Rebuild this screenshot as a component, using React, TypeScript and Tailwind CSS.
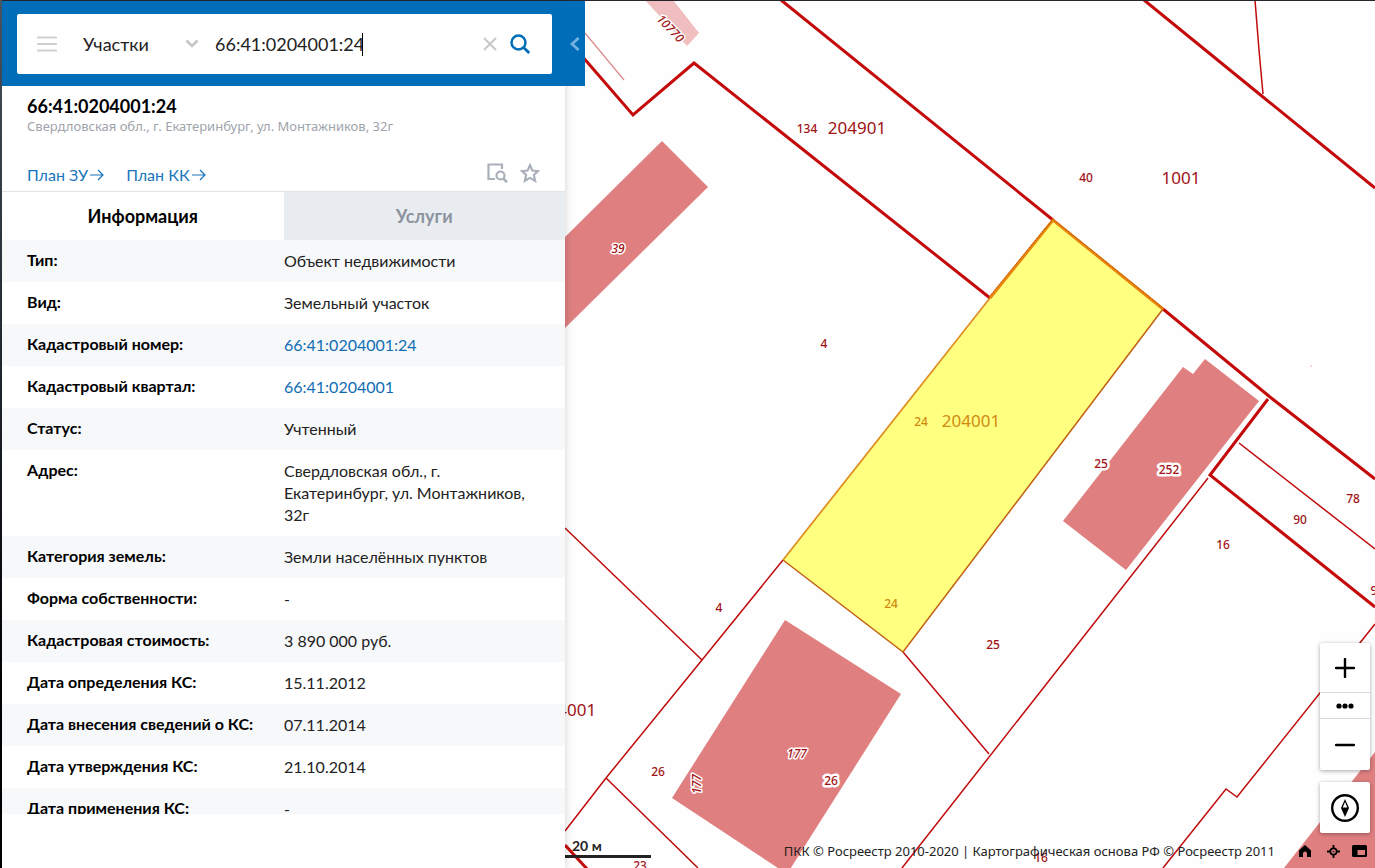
import React from "react";

type Row = { label: string; value: string; link?: boolean };

const rows: Row[] = [
  { label: "Тип:", value: "Объект недвижимости" },
  { label: "Вид:", value: "Земельный участок" },
  { label: "Кадастровый номер:", value: "66:41:0204001:24", link: true },
  { label: "Кадастровый квартал:", value: "66:41:0204001", link: true },
  { label: "Статус:", value: "Учтенный" },
  { label: "Адрес:", value: "Свердловская обл., г. Екатеринбург, ул. Монтажников, 32г" },
  { label: "Категория земель:", value: "Земли населённых пунктов" },
  { label: "Форма собственности:", value: "-" },
  { label: "Кадастровая стоимость:", value: "3 890 000 руб." },
  { label: "Дата определения КС:", value: "15.11.2012" },
  { label: "Дата внесения сведений о КС:", value: "07.11.2014" },
  { label: "Дата утверждения КС:", value: "21.10.2014" },
  { label: "Дата применения КС:", value: "-" },
];

function SearchHeader() {
  return (
    <header className="relative flex h-[85px] shrink-0 bg-[#006db8] pb-3 pl-[15px] pr-[13px] pt-[13px]">
      <form className="flex min-w-0 flex-1 items-center rounded-[2px] bg-white pl-5 pr-[22px]" onSubmit={(e) => e.preventDefault()}>
        <button type="button" aria-label="Меню" className="mr-[22px]">
          <svg width="20" height="16" viewBox="0 0 20 16" stroke="#cfcfcf" strokeWidth="2.2" strokeLinecap="round">
            <path d="M1 1.5h18M1 8h18M1 14.5h18" />
          </svg>
        </button>
        <div className="relative flex w-[120px] shrink-0 items-center">
          <select aria-label="Тип объекта" className="w-full appearance-none bg-transparent pl-1 text-lg leading-6 text-[#222] outline-none">
            <option>Участки</option>
          </select>
          <svg className="pointer-events-none absolute right-0" width="14" height="10" viewBox="0 0 14 10" fill="none" stroke="#c4c4c4" strokeWidth="2.6">
            <path d="M1.5 1.5L7 7l5.5-5.5" />
          </svg>
        </div>
        <div className="ml-4 flex min-w-0 flex-1 items-center">
          <input
            aria-label="Поиск"
            defaultValue="66:41:0204001:24"
            className="w-[147px] bg-transparent text-lg leading-6 text-[#222] outline-none"
          />
          <span className="h-[23px] w-px bg-black" />
        </div>
        <button type="button" aria-label="Очистить" className="mr-[13px]">
          <svg width="14" height="14" viewBox="0 0 14 14" stroke="#c8c8c8" strokeWidth="2">
            <path d="M1 1l12 12M13 1L1 13" />
          </svg>
        </button>
        <button type="submit" aria-label="Найти">
          <svg width="20" height="20" viewBox="0 0 20 20" fill="none" stroke="#006db8" strokeWidth="2.5">
            <circle cx="8.5" cy="8.5" r="7" />
            <path d="M13.6 13.6l5.6 5.4" strokeWidth="2.8" />
          </svg>
        </button>
      </form>
      <button type="button" aria-label="Свернуть панель" className="absolute left-full top-0 z-10 flex h-full w-5 items-center justify-center bg-[#006db8]">
        <svg width="10" height="14" viewBox="0 0 10 14" fill="none" stroke="#76b2dd" strokeWidth="2.8">
          <path d="M8.6 1L2 7l6.6 6" />
        </svg>
      </button>
    </header>
  );
}

function PlanLink({ children }: { children: React.ReactNode }) {
  return (
    <a href="#" className="flex items-center gap-[2px] text-base leading-6 text-[#1a75bb]">
      {children}
      <svg width="14" height="12" viewBox="0 0 14 12" fill="none" stroke="#1a75bb" strokeWidth="1.2">
        <path d="M0 6h13M8 1l5 5-5 5" />
      </svg>
    </a>
  );
}

function Sidebar() {
  return (
    <aside className="relative z-10 flex w-[563px] shrink-0 flex-col bg-white shadow-[2px_0_6px_rgba(0,0,0,0.12)]">
      <SearchHeader />
      <div className="border-b border-[#e0e3e8] pb-1 pl-[25px] pr-[25px] pt-2">
        <h1 className="text-lg font-bold leading-6 text-black">66:41:0204001:24</h1>
        <p className="font-['Noto_Sans',sans-serif] text-[13px] leading-4 text-[#9ea4ab]">
          Свердловская обл., г. Екатеринбург, ул. Монтажников, 32г
        </p>
        <div className="mt-7 flex items-center gap-[22px]">
          <PlanLink>План ЗУ</PlanLink>
          <PlanLink>План КК</PlanLink>
          <div className="mb-1 ml-auto flex items-center gap-3">
            <button type="button" aria-label="Показать на карте">
              <svg width="21" height="21" viewBox="0 0 21 21" fill="none" stroke="#aab0ba" strokeWidth="2.2">
                <path d="M8 17H1.5V2.5H15V7" />
                <circle cx="13.5" cy="13.5" r="4" />
                <path d="M16.3 16.5l3.7 3.7" strokeWidth="2.6" />
              </svg>
            </button>
            <button type="button" aria-label="В избранное">
              <svg width="20" height="20" viewBox="0 0 20 20" fill="none" stroke="#aab0ba" strokeWidth="2.2">
                <path d="M10 2.2l2.4 5.3 5.7.6-4.2 3.9 1.2 5.8-5.1-2.9-5.1 2.9 1.2-5.8-4.2-3.9 5.7-.6z" />
              </svg>
            </button>
          </div>
        </div>
      </div>
      <div role="tablist" className="flex h-12 shrink-0 text-lg font-bold">
        <button type="button" role="tab" aria-selected="true" className="flex-1 bg-white text-black">Информация</button>
        <button type="button" role="tab" aria-selected="false" className="flex-1 bg-[#e9edf2] text-[#8c939d]">Услуги</button>
      </div>
      <div className="mb-[54px] min-h-0 flex-1 overflow-y-auto [scrollbar-width:none]">
        <table className="w-full table-fixed text-left text-base leading-[22px]">
          <tbody>
            {rows.map((row) => (
              <tr key={row.label} className="align-top odd:bg-[#f7f8fa]">
                <th scope="row" className="w-[257px] whitespace-nowrap pb-[11px] pl-[25px] pt-[9px] font-bold text-black">{row.label}</th>
                <td className="py-[10px] pl-[25px] pr-8 text-[#222]">
                  {row.link ? <a href="#" className="text-[#0e6db5]">{row.value}</a> : row.value}
                </td>
              </tr>
            ))}
          </tbody>
        </table>
      </div>
    </aside>
  );
}

type Label = { x: number; y: number; text: string; big?: boolean; halo?: boolean; italic?: boolean; rotate?: number; color?: string };

const labels: Label[] = [
  { x: 671, y: 28, text: "10770", halo: true, italic: true, rotate: 46 },
  { x: 807, y: 128, text: "134" },
  { x: 857, y: 128, text: "204901", big: true },
  { x: 1086, y: 177, text: "40" },
  { x: 1181, y: 178, text: "1001", big: true },
  { x: 618, y: 248, text: "39", halo: true, italic: true },
  { x: 824, y: 343, text: "4" },
  { x: 921, y: 421, text: "24", color: "#d08a10" },
  { x: 971, y: 421, text: "204001", big: true, color: "#d08a10" },
  { x: 891, y: 603, text: "24", color: "#d08a10" },
  { x: 1101, y: 463, text: "25", halo: true },
  { x: 1169, y: 469, text: "252", halo: true },
  { x: 1353, y: 498, text: "78" },
  { x: 1300, y: 519, text: "90" },
  { x: 1223, y: 544, text: "16" },
  { x: 1374, y: 590, text: "9" },
  { x: 719, y: 607, text: "4" },
  { x: 993, y: 644, text: "25" },
  { x: 567, y: 710, text: "204001", big: true },
  { x: 658, y: 771, text: "26" },
  { x: 797, y: 753, text: "177", halo: true, italic: true },
  { x: 831, y: 780, text: "26", halo: true },
  { x: 696, y: 784, text: "177", halo: true, italic: true, rotate: -90 },
  { x: 640, y: 865, text: "23" },
  { x: 1041, y: 857, text: "16" },
];

function MapDrawing() {
  return (
    <svg className="absolute inset-0 h-full w-full" viewBox="565 1 810 867" preserveAspectRatio="xMinYMin slice" role="img" aria-label="Кадастровая карта">
      <g fill="#df7f80">
        <path d="M565 237L662 141L708 187L565 328Z" />
        <path d="M1183 367L1193 374L1205 359L1259 401L1126 570L1063 521Z" />
        <path d="M785 620L901 694L787 874L672 798Z" />
        <path d="M1375 752V868H1284Z" />
        <path d="M645 0H673L699 33L687 46Z" fill="#f0bebe" />
      </g>
      <path d="M1053 220L1163 309L903 652L783 560Z" fill="#ffff80" />
      <g fill="none" stroke="#c00a0c" strokeWidth="1.5">
        <path d="M585 33L624 80" stroke="#dc8a8c" strokeWidth="1.2" />
        <path d="M1255 0L1259 50L1263 94" />
        <path d="M1239 443L1375 549" />
        <path d="M1208 478L902 868" />
        <path d="M903 652L989 754" />
        <path d="M783 560L702 660L606 778L565 831" />
        <path d="M565 528L702 660" />
        <path d="M606 778L698 868" />
        <path d="M1375 624L1237 797L1226 789L1163 868" />
      </g>
      <g fill="none" stroke="#c4090b" strokeWidth="3">
        <path d="M575 48L633 115L694 63L990 298" />
        <path d="M781 0L1053 220" />
        <path d="M1163 309L1270 397L1375 479" />
        <path d="M1144 0L1263 97L1375 188" />
        <path d="M1268 399L1210 475L1375 607" />
        <path d="M565 845L588 870" />
      </g>
      <g fill="none">
        <path d="M1163 309L903 652L783 560" stroke="#c06010" strokeWidth="1.5" />
        <path d="M783 560L990 298" stroke="#df9020" strokeWidth="1.8" />
        <path d="M990 298L1053 220L1163 309" stroke="#e8860c" strokeWidth="3" />
        <path d="M989 297L1053 219L1163 308" stroke="#b84010" strokeWidth="0.8" strokeDasharray="2 1" />
      </g>
      <circle cx="1311" cy="366" r="1" fill="#f3c8cc" />
      <g textAnchor="middle" fontFamily="'Noto Sans', sans-serif">
        {labels.map((l) => (
          <text
            key={`${l.text}-${l.x}`}
            x={l.x}
            y={l.y + (l.big ? 6 : 5)}
            fontSize={l.big ? 17 : 12}
            fontWeight={l.big ? 400 : 500}
            fontStyle={l.italic ? "italic" : "normal"}
            fill={l.color ?? "#a11216"}
            stroke={l.halo ? "#fff" : "none"}
            strokeWidth={l.italic ? 3 : 5}
            strokeLinejoin="round"
            paintOrder="stroke"
            transform={l.rotate ? `rotate(${l.rotate} ${l.x} ${l.y})` : undefined}
          >
            {l.text}
          </text>
        ))}
      </g>
    </svg>
  );
}

function MapControls() {
  return (
    <div className="absolute bottom-[35px] right-[5px] flex w-[50px] flex-col gap-3">
      <div className="flex flex-col divide-y divide-[#d9d9d9] rounded-[2px] bg-white shadow-[0_1px_4px_rgba(0,0,0,0.35)]">
        <button type="button" aria-label="Приблизить" className="flex h-[50px] items-center justify-center">
          <svg width="20" height="20" viewBox="0 0 20 20" stroke="#000" strokeWidth="2.4" strokeLinecap="round"><path d="M1 10h18M10 1v18" /></svg>
        </button>
        <button type="button" aria-label="Масштаб" className="flex h-[26px] items-center justify-center">
          <svg width="18" height="6" viewBox="0 0 18 6"><circle cx="3" cy="3" r="2.6" /><circle cx="9" cy="3" r="2.6" /><circle cx="15" cy="3" r="2.6" /></svg>
        </button>
        <button type="button" aria-label="Отдалить" className="flex h-[51px] items-center justify-center">
          <svg width="20" height="4" viewBox="0 0 20 4" stroke="#000" strokeWidth="2.4" strokeLinecap="round"><path d="M1 2h18" /></svg>
        </button>
      </div>
      <button type="button" aria-label="Компас" className="flex h-[51px] items-center justify-center rounded-[2px] bg-white shadow-[0_1px_4px_rgba(0,0,0,0.35)]">
        <svg width="28" height="28" viewBox="0 0 28 28">
          <circle cx="14" cy="14" r="12.8" fill="none" stroke="#000" strokeWidth="2.4" />
          <path d="M14 5L18 14L14 23L10 14Z" />
          <path d="M14 8L16.3 13.6H11.7Z" fill="#fff" />
        </svg>
      </button>
    </div>
  );
}

function MapFooter() {
  return (
    <footer className="absolute bottom-[5px] right-2 flex items-center text-[#222]">
      <span className="mr-6 whitespace-nowrap font-['Noto_Sans',sans-serif] text-[13px] leading-6">
        ПКК © Росреестр 2010-2020 | Картографическая основа РФ © Росреестр 2011
      </span>
      <button type="button" aria-label="Домой" className="mr-4">
        <svg width="12" height="12" viewBox="0 0 12 12"><path d="M6 0L12 5.5V12H8V8.5a2 2 0 0 0-4 0V12H0V5.5Z" fill="#000" /></svg>
      </button>
      <button type="button" aria-label="Моё местоположение" className="mr-3">
        <svg width="13" height="13" viewBox="0 0 13 13" fill="none" stroke="#000" strokeWidth="1.8">
          <circle cx="6.5" cy="6.5" r="3.2" />
          <path d="M6.5 0v4M6.5 9v4M0 6.5h4M9 6.5h4" />
          <circle cx="6.5" cy="6.5" r="0.8" fill="#000" stroke="none" />
        </svg>
      </button>
      <button type="button" aria-label="Обзорная карта">
        <svg width="15" height="12" viewBox="0 0 15 12">
          <rect width="15" height="12" rx="1.5" fill="#000" />
          <path d="M5.5 5H13V10H5.5Z" fill="#df7f80" />
        </svg>
      </button>
    </footer>
  );
}

export default function App() {
  return (
    <div className="flex h-screen bg-gradient-to-b from-[#4a5560] via-[#1a1f26] to-black pl-[2px] font-[Lato,sans-serif]">
      <div className="flex min-w-0 flex-1 border-t border-[#26262c]">
        <Sidebar />
        <main className="relative min-w-0 flex-1 overflow-hidden bg-[#fefefe]">
          <MapDrawing />
          <div className="absolute bottom-[10px] left-0 w-[86px] border-b-[3px] border-[#222] pl-[7px] text-sm font-bold leading-[18px] text-[#222]">20 м</div>
          <MapControls />
          <MapFooter />
        </main>
      </div>
    </div>
  );
}
